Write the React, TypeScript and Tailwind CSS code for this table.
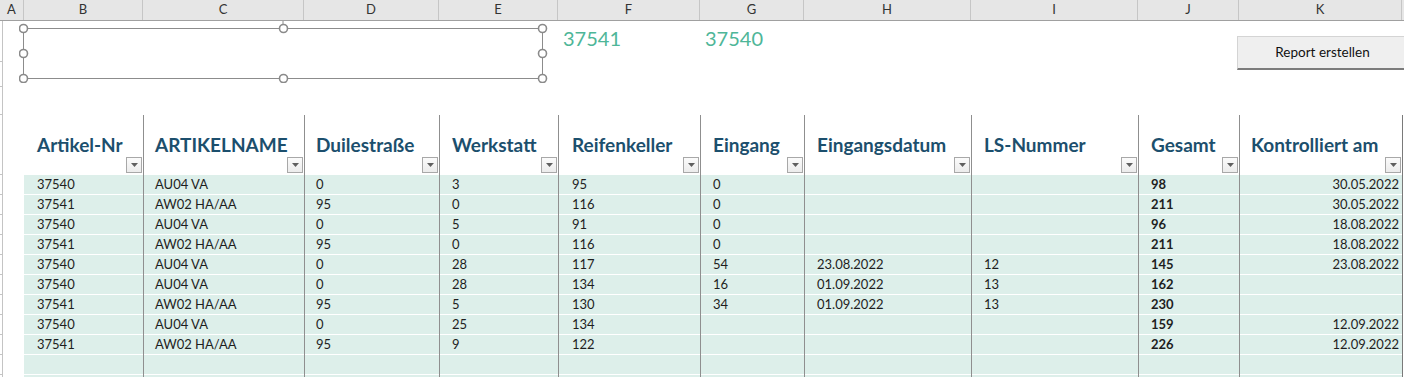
import React from "react";

type Col = {
  letter: string;
  head: string;
  cell: string;
  pad: string;
};

// column widths follow the sheet (B..K), borders included
const COLS: Col[] = [
  { letter: "B", head: "w-[119px]", cell: "w-[119px]", pad: "pl-[13px]" },
  { letter: "C", head: "w-[161px]", cell: "w-[161px] border-l border-[#8f8f8f]", pad: "pl-[11px]" },
  { letter: "D", head: "w-[135px]", cell: "w-[135px] border-l border-[#8f8f8f]", pad: "pl-[11px]" },
  { letter: "E", head: "w-[119px]", cell: "w-[119px] border-l border-[#8f8f8f]", pad: "pl-[12px]" },
  { letter: "F", head: "w-[142px]", cell: "w-[142px] border-l border-[#8f8f8f]", pad: "pl-[13px]" },
  { letter: "G", head: "w-[104px]", cell: "w-[104px] border-l border-[#8f8f8f]", pad: "pl-[12px]" },
  { letter: "H", head: "w-[167px]", cell: "w-[167px] border-l border-[#8f8f8f]", pad: "pl-[12px]" },
  { letter: "I", head: "w-[167px]", cell: "w-[167px] border-l border-[#8f8f8f]", pad: "pl-[12px]" },
  { letter: "J", head: "w-[101px]", cell: "w-[101px] border-l border-[#8f8f8f]", pad: "pl-[12px]" },
  { letter: "K", head: "w-[163px]", cell: "w-[164px] border-l border-r border-l-[#8f8f8f] border-r-[#7a7a7a]", pad: "pl-[11px]" },
];

const HEADERS = [
  "Artikel-Nr",
  "ARTIKELNAME",
  "Duilestraße",
  "Werkstatt",
  "Reifenkeller",
  "Eingang",
  "Eingangsdatum",
  "LS-Nummer",
  "Gesamt",
  "Kontrolliert am",
];

const ROWS: string[][] = [
  ["37540", "AU04 VA", "0", "3", "95", "0", "", "", "98", "30.05.2022"],
  ["37541", "AW02 HA/AA", "95", "0", "116", "0", "", "", "211", "30.05.2022"],
  ["37540", "AU04 VA", "0", "5", "91", "0", "", "", "96", "18.08.2022"],
  ["37541", "AW02 HA/AA", "95", "0", "116", "0", "", "", "211", "18.08.2022"],
  ["37540", "AU04 VA", "0", "28", "117", "54", "23.08.2022", "12", "145", "23.08.2022"],
  ["37540", "AU04 VA", "0", "28", "134", "16", "01.09.2022", "13", "162", ""],
  ["37541", "AW02 HA/AA", "95", "5", "130", "34", "01.09.2022", "13", "230", ""],
  ["37540", "AU04 VA", "0", "25", "134", "", "", "", "159", "12.09.2022"],
  ["37541", "AW02 HA/AA", "95", "9", "122", "", "", "", "226", "12.09.2022"],
  ["", "", "", "", "", "", "", "", "", ""],
  ["", "", "", "", "", "", "", "", "", ""],
];

function RowEdge() {
  // what is left of the row-number column, plus column A
  return (
    <>
      <div className="w-[3px] shrink-0 border-r border-b border-[#c4c4c4]" />
      <div className="w-[21px] shrink-0" />
    </>
  );
}

function FilterButton() {
  return (
    <div className="mb-[2px] mr-[1px] flex h-[17px] w-[16px] items-center justify-center self-end border border-[#a8a8a8] bg-gradient-to-b from-[#fbfbfb] to-[#ececec]">
      <svg width="7" height="4" viewBox="0 0 7 4">
        <path d="M0 0h7L3.5 4z" fill="#5f5f5f" />
      </svg>
    </div>
  );
}

function SelectedShape() {
  const handles = [
    [4, 4], [264, 4], [523, 4],
    [4, 29], [523, 29],
    [4, 54], [264, 54], [523, 54],
  ];
  return (
    <svg
      className="absolute left-[19px] top-[21px]"
      width="530"
      height="62"
      viewBox="0 -3 530 62"
    >
      <line x1="264" y1="-3" x2="264" y2="4" stroke="#8c8c8c" />
      <rect x="4.5" y="4.5" width="519" height="50" fill="none" stroke="#8c8c8c" />
      {handles.map(([x, y], i) => (
        <circle key={i} cx={x + 0.5} cy={y + 0.5} r="4" fill="#fff" stroke="#8a8a8a" strokeWidth="1.6" />
      ))}
    </svg>
  );
}

export default function App() {
  return (
    <div className="relative h-[377px] w-[1404px] overflow-hidden bg-white font-['Lato','Noto_Sans',sans-serif] text-[#1e1e1e]">
      {/* column letters */}
      <div className="flex h-[21px] border-b border-[#a0a0a0] bg-[#e6e6e6] text-[13px] text-[#333]">
        <div className="flex w-[24px] items-center justify-center border-r border-[#c6c6c6]">A</div>
        {COLS.map((c) => (
          <div key={c.letter} className={`${c.head} flex items-center justify-center border-r border-[#c6c6c6]`}>
            {c.letter}
          </div>
        ))}
      </div>

      {/* rows above the table */}
      <div className="flex h-[41px]">
        <RowEdge />
        <div className="w-[534px] shrink-0" />
        <div className="w-[142px] shrink-0 pl-[5px] pt-[5px] text-[20px] leading-[24px] text-[#4eb698]">37541</div>
        <div className="w-[104px] shrink-0 pl-[5px] pt-[5px] text-[20px] leading-[24px] text-[#4eb698]">37540</div>
      </div>
      <div className="flex h-[25px]">
        <RowEdge />
      </div>
      <div className="flex h-[28px]">
        <RowEdge />
      </div>

      {/* table header */}
      <div className="flex h-[60px]">
        <RowEdge />
        {COLS.map((c, i) => (
          <div key={c.letter} className={`${c.cell} flex shrink-0 flex-col justify-between`}>
            <div className={`${c.pad} pt-[18px] text-[19px] font-bold leading-[24px] text-[#1c4f6d] whitespace-nowrap`}>
              {HEADERS[i]}
            </div>
            <FilterButton />
          </div>
        ))}
      </div>

      {/* table body */}
      {ROWS.map((r, ri) => (
        <div key={ri} className="flex h-[20px]">
          <RowEdge />
          {COLS.map((c, ci) => (
            <div
              key={c.letter}
              className={`${c.cell} shrink-0 bg-[#ddefea] text-[13px] leading-[19px] whitespace-nowrap shadow-[inset_0_-1px_0_#ffffff] ${
                ci === 9 ? "pr-[3px] text-right" : c.pad
              } ${ci === 8 ? "font-bold" : ""}`}
            >
              {r[ci]}
            </div>
          ))}
        </div>
      ))}

      <SelectedShape />

      <button className="absolute left-[1237px] top-[36px] h-[34px] w-[170px] border-l border-t border-[#d4d4d4] border-b-2 border-b-[#7c7c7c] bg-[#efefef] text-[13.5px] text-[#111]">
        Report erstellen
      </button>
    </div>
  );
}
